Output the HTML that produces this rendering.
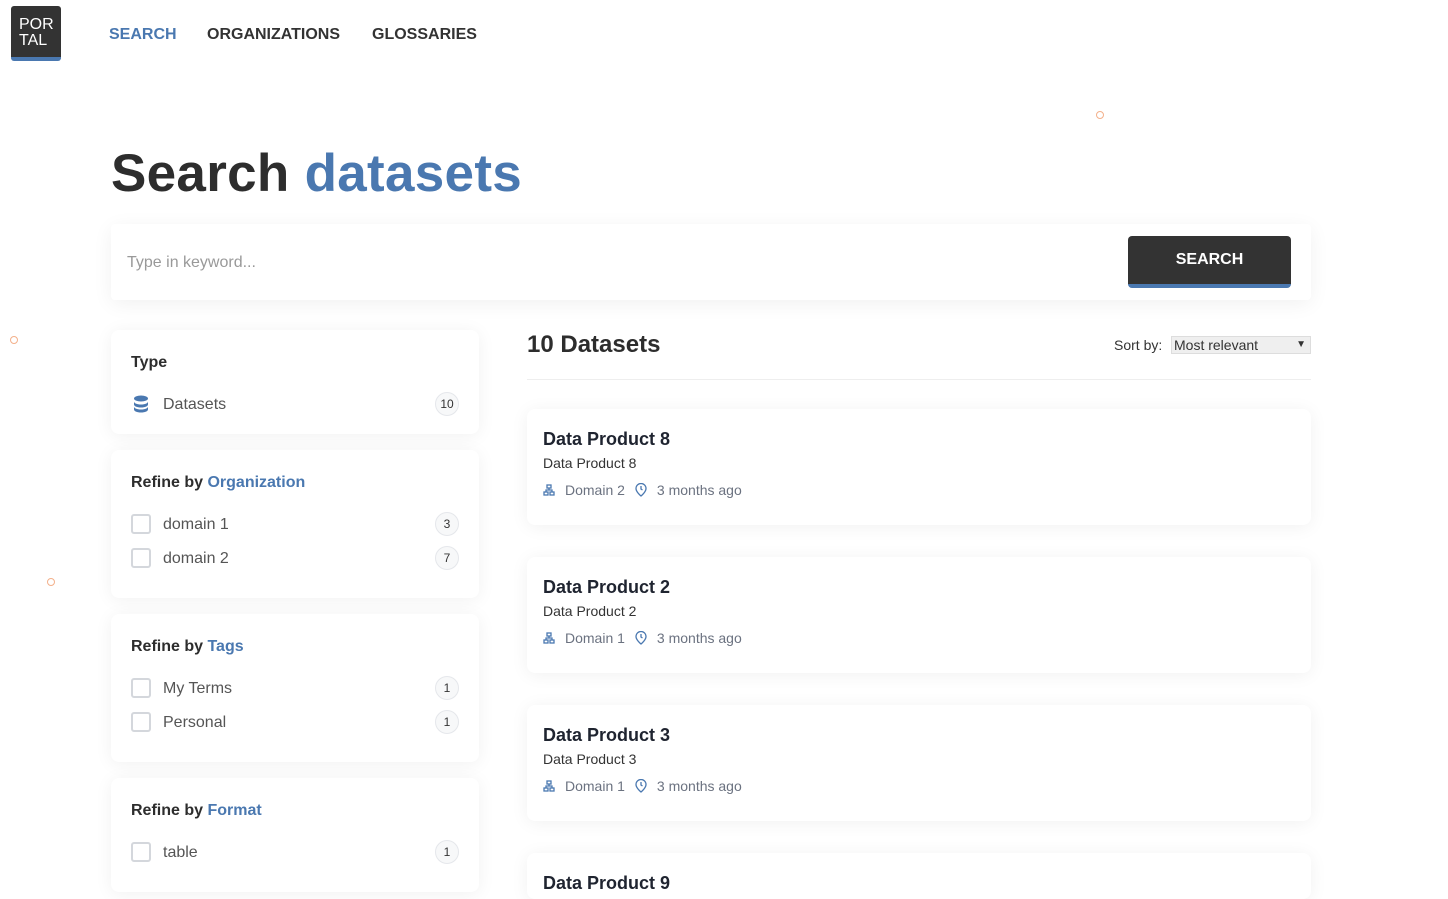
<!DOCTYPE html><html><head><style>
*{box-sizing:border-box;margin:0;padding:0}
html,body{width:1448px;height:899px;overflow:hidden}
body{background:#fff;font-family:"Liberation Sans",Arial,sans-serif;color:#333;position:relative}
.logo{position:absolute;left:11px;top:6px;width:50px;height:55px;background:#333;border-radius:3px;border-bottom:4px solid #4a78b0;color:#fff;font-size:16px;line-height:16px;padding:11px 0 0 8px}
.nav{position:absolute;top:26px;font-size:16px;font-weight:bold;color:#333}
h1{position:absolute;left:111px;top:143px;font-size:53px;font-weight:bold;color:#2d2d2d;letter-spacing:0.3px}
h1 span{color:#4a78b0}
.search{position:absolute;left:111px;top:224px;width:1200px;height:76px;background:#fff;box-shadow:0 4px 20px rgba(0,0,0,.06);border-radius:4px}
.search .ph{position:absolute;left:16px;top:30px;font-size:16px;color:#999}
.btn{position:absolute;left:1017px;top:12px;width:163px;height:52px;background:#333;border-radius:4px;border-bottom:4px solid #4a78b0;color:#fff;font-weight:bold;font-size:16px;text-align:center;line-height:48px}
.panel{position:absolute;left:111px;width:368px;background:#fff;border-radius:8px;box-shadow:0 2px 18px rgba(0,0,0,.06);padding:24px 20px}
.panel h3{font-size:16px;font-weight:bold;color:#2d2d2d;margin-bottom:21px}
.panel h3 span{color:#4a78b0}
.row{position:relative;height:34px;font-size:16px;color:#555;line-height:20px}
.cb{position:absolute;left:0;top:1px;width:20px;height:20px;border:2px solid #d4d7dc;border-radius:3px}
.row .t{position:absolute;left:32px;top:2px}
.cnt{position:absolute;right:0;top:-1px;width:24px;height:24px;border-radius:50%;border:1px solid #e5e7eb;background:#f7f8f9;font-size:12px;text-align:center;line-height:22px;color:#333}
.card{position:absolute;left:527px;width:784px;height:116px;background:#fff;border-radius:8px;box-shadow:0 2px 18px rgba(0,0,0,.06);padding:20px 16px}
.card h4{font-size:18px;font-weight:bold;color:#1f2430}
.card .s{font-size:14px;color:#333;margin-top:5px}
.card .m{font-size:14px;color:#6b7280;margin-top:11px;display:flex;align-items:center;gap:6px}
.dot{position:absolute;width:8px;height:8px;border:1px solid #f3b08a;border-radius:50%}
</style></head><body>
<div class="logo">POR<br>TAL</div>
<div class="nav" style="left:109px;color:#4a78b0">SEARCH</div>
<div class="nav" style="left:207px">ORGANIZATIONS</div>
<div class="nav" style="left:372px">GLOSSARIES</div>
<div class="dot" style="left:1096px;top:111px"></div>
<div class="dot" style="left:10px;top:336px"></div>
<div class="dot" style="left:47px;top:578px"></div>
<h1>Search <span>datasets</span></h1>
<div class="search"><div class="ph">Type in keyword...</div><div class="btn">SEARCH</div></div>

<div class="panel" style="top:330px;height:104px"><h3>Type</h3>
<div class="row"><svg style="position:absolute;left:2px;top:2px" width="16" height="18" viewBox="0 0 16 18"><ellipse cx="8" cy="3.5" rx="7" ry="3" fill="#4a78b0"/><path d="M1 6.5c0 1.7 3 3 7 3s7-1.3 7-3v3c0 1.7-3 3-7 3s-7-1.3-7-3z M1 11.5c0 1.7 3 3 7 3s7-1.3 7-3v3c0 1.7-3 3-7 3s-7-1.3-7-3z" fill="#4a78b0"/></svg><span class="t">Datasets</span><span class="cnt">10</span></div></div>

<div class="panel" style="top:450px;height:148px"><h3>Refine by <span>Organization</span></h3>
<div class="row"><span class="cb"></span><span class="t">domain 1</span><span class="cnt">3</span></div>
<div class="row"><span class="cb"></span><span class="t">domain 2</span><span class="cnt">7</span></div></div>

<div class="panel" style="top:614px;height:148px"><h3>Refine by <span>Tags</span></h3>
<div class="row"><span class="cb"></span><span class="t">My Terms</span><span class="cnt">1</span></div>
<div class="row"><span class="cb"></span><span class="t">Personal</span><span class="cnt">1</span></div></div>

<div class="panel" style="top:778px;height:114px"><h3>Refine by <span>Format</span></h3>
<div class="row"><span class="cb"></span><span class="t">table</span><span class="cnt">1</span></div></div>

<div style="position:absolute;left:527px;top:331px;font-size:24px;font-weight:bold;color:#2d2d2d">10 Datasets</div>
<div style="position:absolute;left:1114px;top:337px;font-size:14px;color:#333">Sort by:</div>
<div style="position:absolute;left:1171px;top:336px;width:140px;height:18px;background:#efefef;border:1px solid #ddd;font-size:14px;line-height:16px;padding-left:2px">Most relevant<span style="position:absolute;right:4px;top:0;font-size:10px">▼</span></div>
<div style="position:absolute;left:527px;top:379px;width:784px;height:1px;background:#eee"></div>

<div class="card" style="top:409px"><h4>Data Product 8</h4><div class="s">Data Product 8</div><div class="m"><svg width="12" height="12" viewBox="0 0 12 12" fill="none" stroke="#4a78b0" stroke-width="1.3"><rect x="4" y="1" width="4" height="3"/><rect x="1" y="8" width="4" height="3"/><rect x="7" y="8" width="4" height="3"/><path d="M6 4v2M3 8V6h6v2"/></svg><span style="margin-left:4px">Domain 2</span><svg style="margin-left:4px" width="12" height="14" viewBox="0 0 12 14" fill="none" stroke="#4a78b0" stroke-width="1.3"><path d="M6 13s5-4 5-7.5A5 5 0 001 5.5C1 9 6 13 6 13z"/><path d="M6 3v3l1.5 1"/></svg><span style="margin-left:4px">3 months ago</span></div></div>
<div class="card" style="top:557px"><h4>Data Product 2</h4><div class="s">Data Product 2</div><div class="m"><svg width="12" height="12" viewBox="0 0 12 12" fill="none" stroke="#4a78b0" stroke-width="1.3"><rect x="4" y="1" width="4" height="3"/><rect x="1" y="8" width="4" height="3"/><rect x="7" y="8" width="4" height="3"/><path d="M6 4v2M3 8V6h6v2"/></svg><span style="margin-left:4px">Domain 1</span><svg style="margin-left:4px" width="12" height="14" viewBox="0 0 12 14" fill="none" stroke="#4a78b0" stroke-width="1.3"><path d="M6 13s5-4 5-7.5A5 5 0 001 5.5C1 9 6 13 6 13z"/><path d="M6 3v3l1.5 1"/></svg><span style="margin-left:4px">3 months ago</span></div></div>
<div class="card" style="top:705px"><h4>Data Product 3</h4><div class="s">Data Product 3</div><div class="m"><svg width="12" height="12" viewBox="0 0 12 12" fill="none" stroke="#4a78b0" stroke-width="1.3"><rect x="4" y="1" width="4" height="3"/><rect x="1" y="8" width="4" height="3"/><rect x="7" y="8" width="4" height="3"/><path d="M6 4v2M3 8V6h6v2"/></svg><span style="margin-left:4px">Domain 1</span><svg style="margin-left:4px" width="12" height="14" viewBox="0 0 12 14" fill="none" stroke="#4a78b0" stroke-width="1.3"><path d="M6 13s5-4 5-7.5A5 5 0 001 5.5C1 9 6 13 6 13z"/><path d="M6 3v3l1.5 1"/></svg><span style="margin-left:4px">3 months ago</span></div></div>
<div class="card" style="top:853px;height:46px"><h4>Data Product 9</h4></div>
</body></html>
